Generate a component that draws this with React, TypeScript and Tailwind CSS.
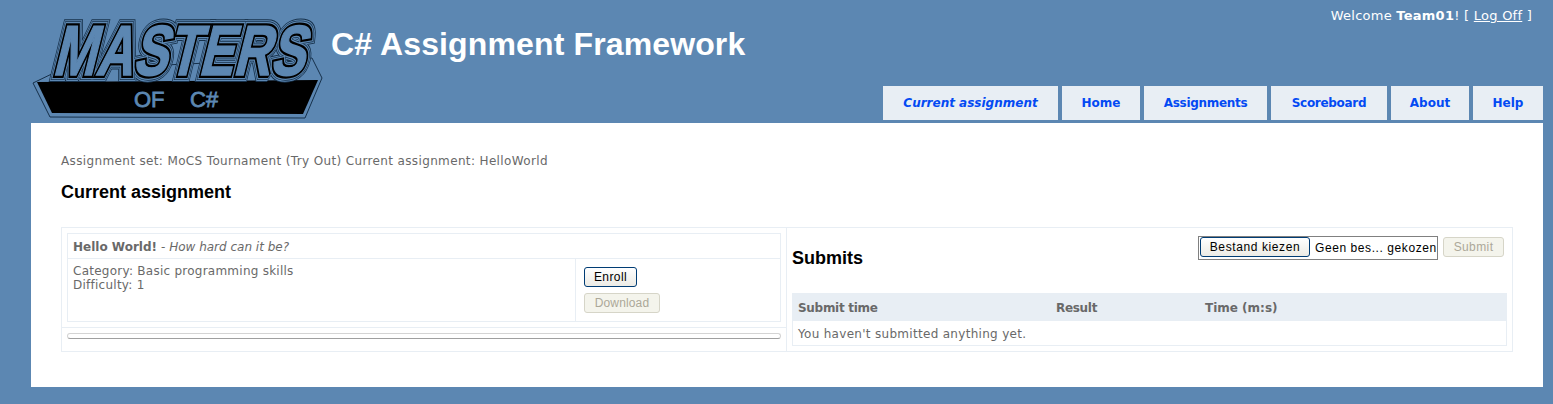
import React from "react";

const verdana = "font-['DejaVu_Sans',sans-serif]";
const arial = "font-['Liberation_Sans',sans-serif]";

const tabs = [
  { label: "Current assignment", width: "w-[175px]", italic: true },
  { label: "Home", width: "w-[78px]" },
  { label: "Assignments", width: "w-[123px]", tight: true },
  { label: "Scoreboard", width: "w-[116px]", tight: true },
  { label: "About", width: "w-[78px]" },
  { label: "Help", width: "w-[70px]" },
];

const Logo = () => (
  <svg width="294" height="106" viewBox="31 14 294 106" className="block shrink-0" strokeMiterlimit="2">
    <defs>
      <text
        id="logo-word"
        x="0"
        y="0"
        fontFamily="Liberation Sans"
        fontWeight="700"
        fontSize="71"
        textLength="252"
        lengthAdjust="spacingAndGlyphs"
        transform="translate(52 75) skewX(-14)"
      >
        MASTERS
      </text>
    </defs>
    <polygon points="33,83 50,117 305,118 322,78 312,58 60,70" fill="#5c87b2" stroke="#16304a" strokeWidth="1" />
    <polygon points="37,82 52,113 303,114 318,80" fill="#000" />
    <use href="#logo-word" fill="none" stroke="#16304a" strokeWidth="14" strokeLinejoin="miter" />
    <use href="#logo-word" fill="none" stroke="#5c87b2" strokeWidth="12" strokeLinejoin="miter" />
    <use href="#logo-word" fill="none" stroke="#16304a" strokeWidth="10" strokeLinejoin="miter" />
    <use href="#logo-word" fill="none" stroke="#5c87b2" strokeWidth="8.5" strokeLinejoin="miter" />
    <use href="#logo-word" fill="#000" stroke="#000" strokeWidth="6" strokeLinejoin="miter" />
    <use href="#logo-word" fill="#5c87b2" stroke="#5c87b2" strokeWidth="1.5" />
    <text x="134" y="107" fontFamily="Liberation Sans" fontSize="22" fill="#5c87b2" stroke="#5c87b2" strokeWidth="0.8">
      OF
    </text>
    <text x="190" y="107" fontFamily="Liberation Sans" fontSize="22" fill="#5c87b2" stroke="#5c87b2" strokeWidth="0.8">
      C#
    </text>
  </svg>
);

const Button = ({ children, active, className }: { children: React.ReactNode; active?: boolean; className?: string }) => (
  <div
    className={`${arial} flex items-center justify-center rounded-[3px] border text-[12px] ${
      active
        ? "border-[#003c74] bg-gradient-to-b from-white to-[#ecebe5] text-black"
        : "border-[#d6d5c8] bg-[#f4f4ec] text-[#aca899]"
    } ${className ?? ""}`}
  >
    {children}
  </div>
);

export default function App() {
  return (
    <div className={`${verdana} h-[404px] w-[1553px] overflow-hidden bg-[#5c87b2] text-[12px] text-[#696969]`}>
      <header className="flex h-[123px]">
        <div className="ml-[31px] mt-[14px]">
          <Logo />
        </div>
        <h1 className={`${arial} ml-[6px] mt-[26px] text-[32px] leading-[37px] font-bold tracking-[0.13px] text-white`}>
          C# Assignment Framework
        </h1>
        <div className="ml-auto mr-[10px] flex flex-col items-end justify-between pb-[3px]">
          <div className="mr-[11px] mt-[8px] text-[13px] leading-[16px] tracking-[0.25px] text-white">
            Welcome <b>Team01</b>! [ <span className="underline">Log Off</span> ]
          </div>
          <nav className="flex gap-[4px]">
            {tabs.map((tab) => (
              <div
                key={tab.label}
                className={`${tab.width} flex h-[34px] items-center justify-center bg-[#e8eef4] text-[12px] font-bold text-[#034af3] ${
                  tab.italic ? "italic" : ""
                } ${tab.tight ? "tracking-[-0.3px]" : ""}`}
              >
                {tab.label}
              </div>
            ))}
          </nav>
        </div>
      </header>

      <main className="ml-[31px] mr-[10px] h-[264px] bg-white px-[30px] pt-[31px]">
        <p className="h-[15px] leading-[15px] tracking-[0.36px]">
          Assignment set: MoCS Tournament (Try Out) Current assignment: HelloWorld
        </p>
        <h2 className={`${arial} mt-[13px] text-[18px] leading-[21px] font-bold text-black`}>Current assignment</h2>

        <div className="mt-[24px] flex h-[125px] w-[1452px] border border-[#e8eef4]">
          <div className="flex w-[725px] flex-col border-r border-[#e8eef4]">
            <div className="h-[99px] px-[5px] pt-[5px]">
              <div className="h-[89px] w-[714px] border border-[#e8eef4]">
                <div className="flex h-[25px] items-center border-b border-[#e8eef4] pl-[5px] pt-[1px]">
                  <b>Hello World!</b>
                  <span className="ml-[4px]">
                    - <i>How hard can it be?</i>
                  </span>
                </div>
                <div className="flex h-[62px]">
                  <div className="w-[508px] border-r border-[#e8eef4] pl-[5px] pt-[5px] leading-[14px] tracking-[0.25px]">
                    <p>Category: Basic programming skills</p>
                    <p>Difficulty: 1</p>
                  </div>
                  <div className="flex flex-col gap-[6px] pl-[8px] pt-[8px]">
                    <Button active className="h-[20px] w-[53px] tracking-[0.4px]">
                      Enroll
                    </Button>
                    <Button className="h-[20px] w-[76px] tracking-[0.15px]">Download</Button>
                  </div>
                </div>
              </div>
            </div>
            <div className="flex-1 border-t border-[#e8eef4] px-[5px] pt-[5px]">
              <div className="h-[6px] w-[714px] rounded-full border border-[#d4d4d4] border-b-[#a0a0a0] bg-white" />
            </div>
          </div>

          <div className="flex-1 pl-[5px] pr-[5px]">
            <div className="flex h-[65px] items-start justify-between">
              <h2 className={`${arial} mt-[20px] text-[18px] leading-[21px] font-bold text-black`}>Submits</h2>
              <div className="mr-[3px] mt-[8px] flex gap-[5px]">
                <div className={`${arial} flex h-[24px] w-[240px] items-start border border-[#808080] pl-[1px] text-black`}>
                  <Button active className="h-[20px] w-[110px] tracking-[0.6px]">
                    Bestand kiezen
                  </Button>
                  <span className="ml-[5px] mt-[4px] leading-[15px] tracking-[0.58px]">Geen bes... gekozen</span>
                </div>
                <Button className="mt-[1px] h-[20px] w-[61px] tracking-[0.4px]">Submit</Button>
              </div>
            </div>
            <div className="h-[53px] w-[715px] border-x border-b border-[#e8eef4]">
              <div className="flex h-[28px] items-center bg-[#e8eef4] pt-[1px] font-bold">
                <div className="w-[258px] pl-[5px] tracking-[-0.3px]">Submit time</div>
                <div className="w-[149px] pl-[5px] tracking-[-0.3px]">Result</div>
                <div className="pl-[5px]">Time (m:s)</div>
              </div>
              <div className="flex h-[24px] items-center pl-[5px] pt-[1px] tracking-[0.3px]">You haven't submitted anything yet.</div>
            </div>
          </div>
        </div>
      </main>
    </div>
  );
}
